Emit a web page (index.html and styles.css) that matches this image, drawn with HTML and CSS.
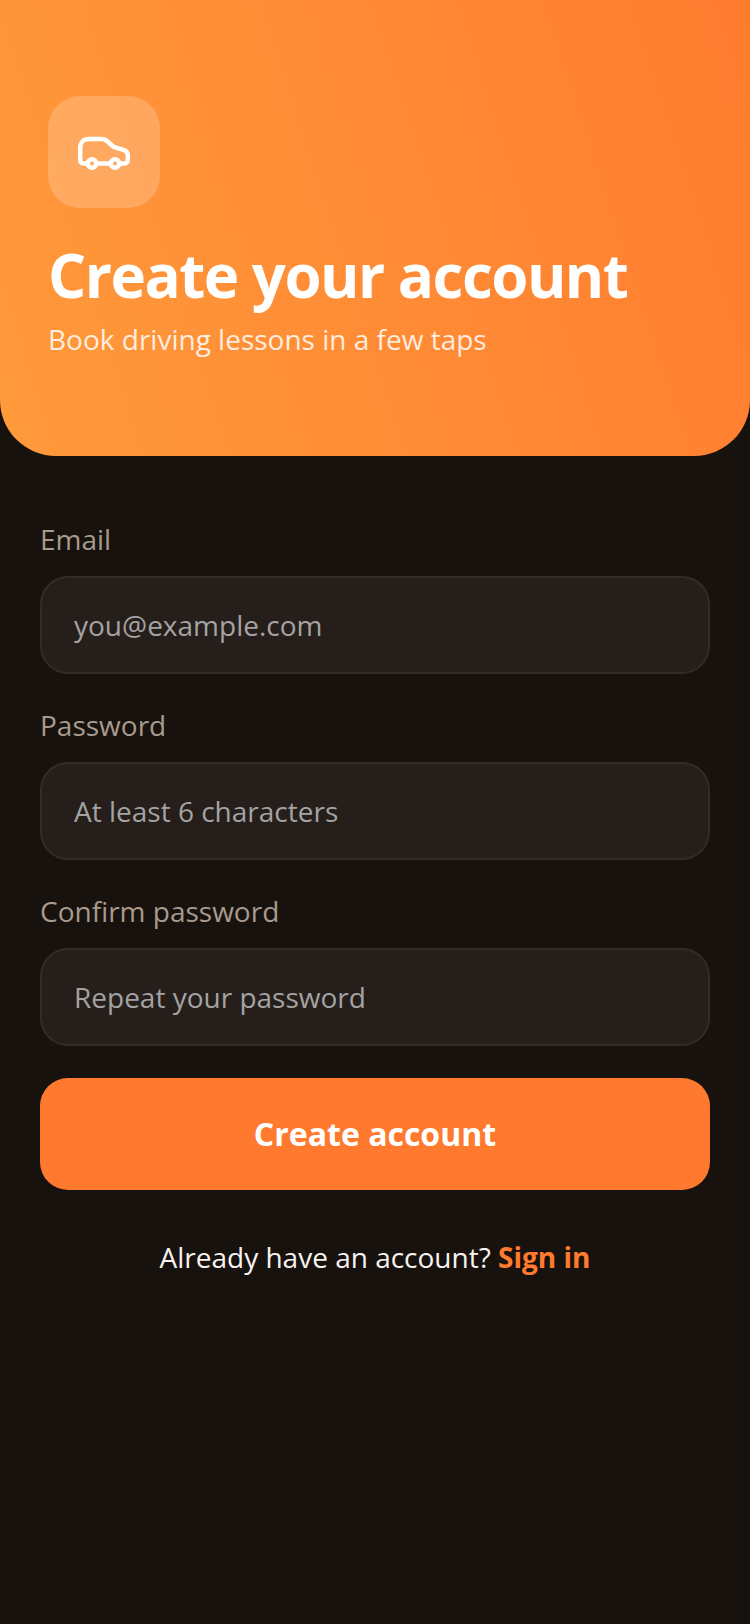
FILE: index.html
```html
<!DOCTYPE html>
<html lang="en">
<head>
<meta charset="utf-8">
<title>Create your account</title>
<link rel="stylesheet" href="styles.css">
</head>
<body>
<div class="screen">
  <header class="hero">
    <div class="logo">
      <svg class="car" viewBox="0 0 52 36" fill="none" stroke="#fff" stroke-width="4.500" stroke-linecap="round" stroke-linejoin="round">
        <path d="M9 29.500H5.500C3.500 29.500 2.200 28 2.200 26V14C2.200 8.500 5.500 5 10.500 5H23.500C25.800 5 27.500 5.700 29 7L35.500 12.800L45.500 15.800C48.500 16.800 49.800 19 49.800 21.500V26C49.800 28 48.500 29.500 46.500 29.500H42"/>
        <path d="M19 29.500H32"/>
        <circle cx="14" cy="29.500" r="4.250"/>
        <circle cx="37" cy="29.500" r="4.250"/>
      </svg>
    </div>
    <h1 class="title">Create your account</h1>
    <p class="subtitle">Book driving lessons in a few taps</p>
  </header>
  <form class="form">
    <label class="field">
      <span class="label">Email</span>
      <input class="input" type="text" placeholder="you@example.com">
    </label>
    <label class="field">
      <span class="label">Password</span>
      <input class="input" type="text" placeholder="At least 6 characters">
    </label>
    <label class="field">
      <span class="label">Confirm password</span>
      <input class="input" type="text" placeholder="Repeat your password">
    </label>
    <button class="submit" type="button">Create account</button>
    <p class="switch">Already have an account? <a class="link">Sign in</a></p>
  </form>
</div>
</body>
</html>
```
FILE: styles.css
```css
* { box-sizing: border-box; }
html, body { margin: 0; padding: 0; }
body {
  background: #17120e;
  font-family: "Open Sans", sans-serif;
  color: #fff;
}
.screen { width: 750px; height: 1624px; overflow: hidden; }
.hero {
  height: 456px;
  padding: 96px 48px 0;
  background: linear-gradient(72deg, #ff9a3b 0%, #ff7c2f 100%);
  border-radius: 0 0 56px 56px;
}
.logo {
  width: 112px;
  height: 112px;
  border-radius: 32px;
  background: rgba(255, 255, 255, 0.2);
  display: flex;
  align-items: center;
  justify-content: center;
}
.car { width: 52px; height: 36px; }
.title {
  margin: 31px 0 0;
  font-size: 60px;
  line-height: 72px;
  font-weight: 700;
  letter-spacing: -1.5px;
}
.subtitle {
  margin: 8px 0 0;
  font-size: 28px;
  line-height: 40px;
  color: rgba(255, 255, 255, 0.85);
}
.form {
  padding: 64px 40px 0;
  display: flex;
  flex-direction: column;
}
.field { display: flex; flex-direction: column; margin-bottom: 32px; }
.label {
  font-size: 28px;
  line-height: 38px;
  color: #a89a8c;
  margin-bottom: 18px;
}
.input {
  height: 98px;
  padding: 0 32px;
  border: 2px solid #332b25;
  border-radius: 28px;
  background: #261e1a;
  font-family: inherit;
  font-size: 28px;
  color: #fff;
  outline: none;
}
.input::placeholder { color: #a3a3a3; opacity: 1; }
.submit {
  height: 112px;
  padding: 0 0 2px;
  border: 0;
  border-radius: 28px;
  background: #ff7a2f;
  color: #fff;
  font-family: inherit;
  font-size: 32px;
  font-weight: 700;
}
.switch {
  margin: 47px 0 0;
  text-align: center;
  font-size: 28px;
  line-height: 40px;
  color: #f8f3ee;
}
.link { color: #ff7a2f; font-weight: 700; }
```
